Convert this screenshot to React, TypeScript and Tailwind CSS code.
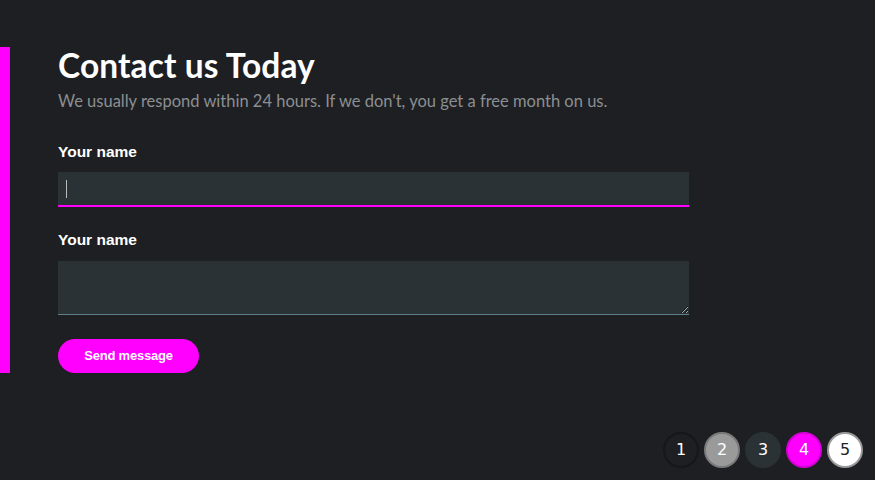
import React from "react";

export default function App() {
  const pages = [
    { n: "1", cls: "bg-[#1d1f22] border-[#15171a] text-white" },
    { n: "2", cls: "bg-[#9a9a9a] border-[#7a7a7a] text-white" },
    { n: "3", cls: "bg-[#2b3235] border-[#2b3235] text-white" },
    { n: "4", cls: "bg-[#ff00ff] border-[#d400d4] text-white" },
    { n: "5", cls: "bg-white border-[#9a9a9a] text-[#222]" },
  ];
  return (
    <div className="w-[875px] h-[480px] bg-[#1d1f22] flex flex-col overflow-hidden">
      <div className="mt-[47px] border-l-[10px] border-[#ff00ff] pl-[48px]">
        <h1 className="text-[33.5px] leading-[36px] font-bold text-white font-['Lato',sans-serif] tracking-[0.1px]">
          Contact us Today
        </h1>
        <p className="mt-[8px] text-[16.5px] leading-[20px] text-[#8c8f92] font-['Lato',sans-serif]">
          We usually respond within 24 hours. If we don't, you get a free month on us.
        </p>
        <label className="block mt-[32px] text-[15.5px] leading-[18px] font-bold text-white font-['Liberation_Sans',sans-serif]">
          Your name
        </label>
        <div className="mt-[11px] w-[631px] h-[35px] bg-[#2b3235] border-b-2 border-[#ff00ff] flex items-center pl-[8px]">
          <div className="w-px h-[18px] bg-[#bbbbbb]" />
        </div>
        <label className="block mt-[24px] text-[15.5px] leading-[18px] font-bold text-white font-['Liberation_Sans',sans-serif]">
          Your name
        </label>
        <textarea className="block mt-[12px] w-[631px] h-[54px] bg-[#2b3235] border-b border-[#5b7f87] outline-none text-white" />
        <button className="block mt-[24px] w-[141px] h-[34px] rounded-full bg-[#ff00ff] text-white text-[13px] tracking-[-0.2px] font-bold font-['Liberation_Sans',sans-serif]">
          Send message
        </button>
      </div>
      <div className="flex-1 flex items-end justify-end pr-[12px] pb-[12px] gap-[5px]">
        {pages.map((p) => (
          <div
            key={p.n}
            className={`w-[36px] h-[36px] rounded-full border-2 flex items-center justify-center text-[16px] font-['DejaVu_Sans',sans-serif] ${p.cls}`}
          >
            {p.n}
          </div>
        ))}
      </div>
    </div>
  );
}
